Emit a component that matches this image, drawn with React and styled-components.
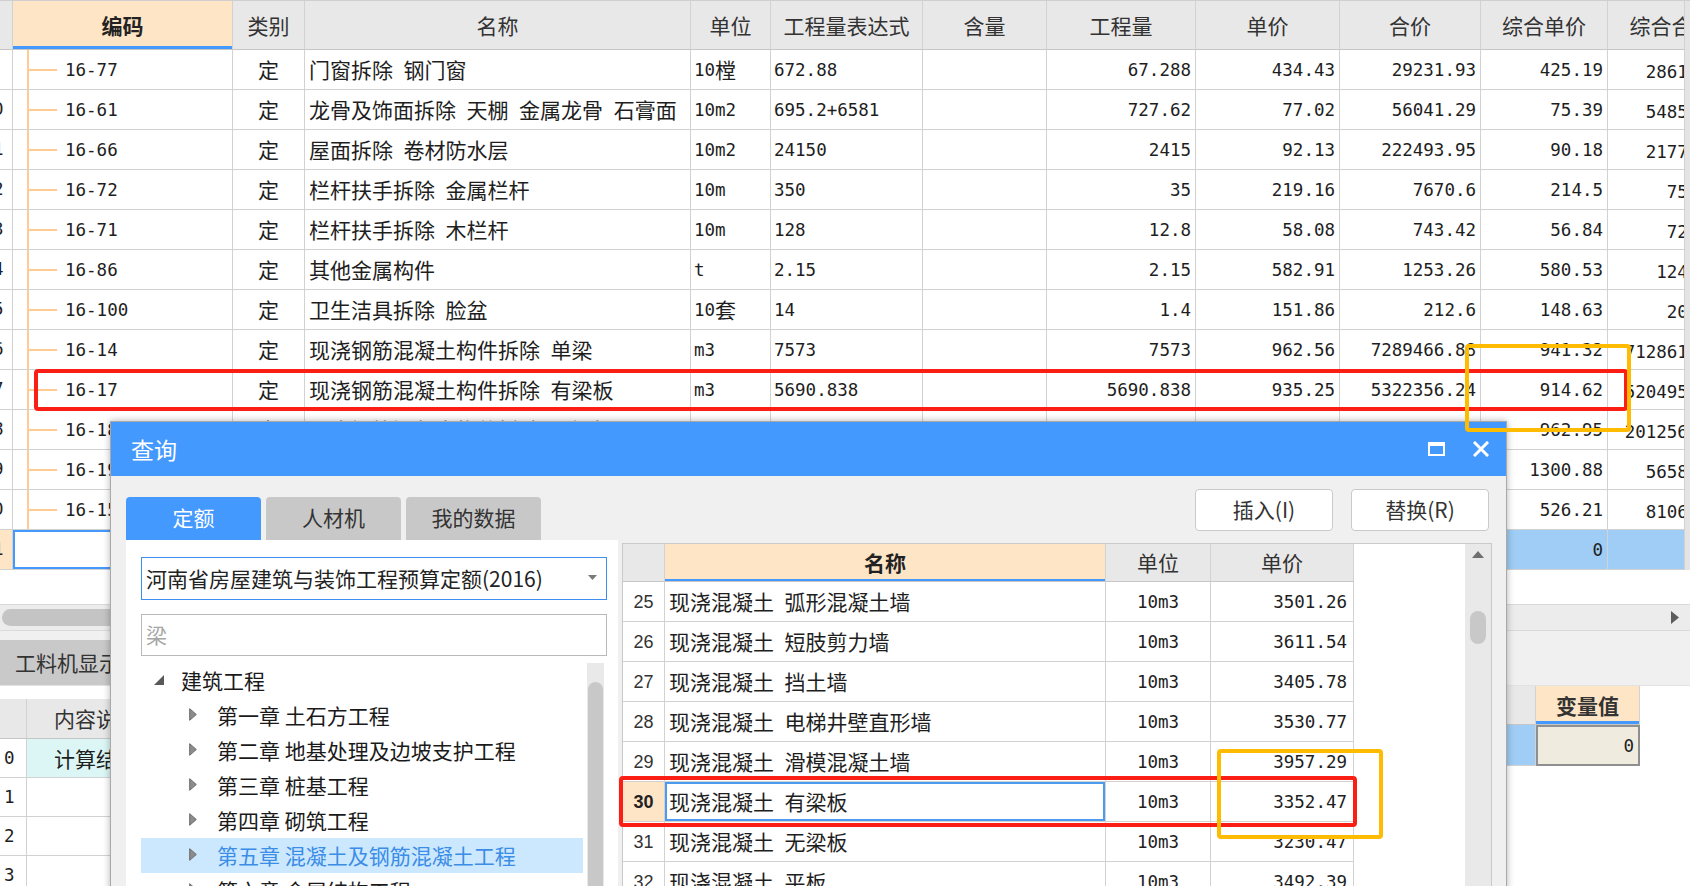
import React from 'react';
import styled, { createGlobalStyle, css } from 'styled-components';

const CJK = `"Noto Sans CJK SC", "Noto Sans", sans-serif`;
const MONO = `"DejaVu Sans Mono", "Liberation Mono", monospace`;
const SANS = `"Liberation Sans", Arial, sans-serif`;

const BLUE = '#4499fe';
const PEACH = '#fde5c6';
const LINE = '#d2d2d2';
const SEL_ROW = '#9fcdf5';

const GlobalStyle = createGlobalStyle`
  html, body { margin: 0; padding: 0; background: #fff; }
  body { width: 1690px; height: 886px; overflow: hidden; font-family: ${CJK}; color: #1e1e1e; }
  * { box-sizing: border-box; }
`;

const Half = styled.span`
  font-family: ${MONO};
  font-size: 0.834em;
  position: relative;
  top: 1px;
`;

function Txt({ children }) {
  const s = String(children ?? '');
  const parts = s.match(/[\x00-\x7f]+|[^\x00-\x7f]+/g) || [];
  return parts.map((p, i) =>
    /^[\x00-\x7f]/.test(p) ? <Half key={i}>{p}</Half> : <React.Fragment key={i}>{p}</React.Fragment>
  );
}

const JUST = { left: 'flex-start', center: 'center', right: 'flex-end' };

/* ---------------- main grid ---------------- */
const MAIN_COLS = [13, 220, 72, 386, 80, 152, 124, 149, 144, 141, 127, 77, 5];
const MAIN_TEMPLATE = MAIN_COLS.map((c) => c + 'px').join(' ');

const Page = styled.div`
  position: relative;
  width: 1690px;
  height: 886px;
  overflow: hidden;
  background: #fff;
  display: flex;
  flex-direction: column;
`;

const TableArea = styled.div`
  height: 604px;
  flex-shrink: 0;
  background: #fff;
  border-top: 1px solid #cfcfcf;
`;

const MainRow = styled.div`
  display: grid;
  grid-template-columns: ${MAIN_TEMPLATE};
  height: ${(p) => (p.$head ? 49 : 40)}px;
  background: ${(p) => (p.$sel ? SEL_ROW : '#fff')};
`;

const Cell = styled.div`
  display: flex;
  align-items: center;
  min-width: 0;
  overflow: hidden;
  white-space: pre;
  border-right: 1px solid ${LINE};
  border-bottom: 1px solid ${LINE};
  font-family: ${CJK};
  font-size: 21px;
  line-height: 1;
  color: #1e1e1e;
  justify-content: ${(p) => JUST[p.$al || 'left']};
  padding: 0 ${(p) => (p.$pad ?? 4)}px;
  position: relative;
`;

const HeadCell = styled(Cell)`
  background: #e8e8e8;
  color: #333;
  justify-content: center;
  border-bottom-color: #c6c6c6;
  ${(p) =>
    p.$hl &&
    css`
      background: ${PEACH};
      font-weight: 700;
      color: #222;
      box-shadow: inset 0 -3px 0 ${BLUE};
    `}
`;

const OverHead = styled(HeadCell)`
  padding: 0;
  justify-content: flex-start;
`;

const NumCell = styled(Cell)`
  padding: 0;
  justify-content: flex-start;
  ${(p) => p.$hl && css`background: ${PEACH};`}
`;

const NumInner = styled.span`
  flex: 0 0 40px;
  margin-left: -27px;
  text-align: center;
  font-family: ${MONO};
  font-size: 17.5px;
`;

const CodeCell = styled(Cell)`
  padding-left: 52px;
  ${(p) =>
    p.$focus
      ? css`
          background: #fff;
          box-shadow: inset 0 0 0 2px ${BLUE};
        `
      : css`
          &::before {
            content: '';
            position: absolute;
            left: 14px;
            top: -1px;
            bottom: -1px;
            width: 2px;
            background: #ffcb93;
          }
          &::after {
            content: '';
            position: absolute;
            left: 14px;
            top: 50%;
            width: 30px;
            height: 2px;
            margin-top: -1px;
            background: #ffcb93;
          }
        `}
`;

const OverCell = styled(Cell)`
  padding: 0;
  justify-content: flex-start;
`;

const OverInner = styled.span`
  flex: 0 0 127px;
  text-align: ${(p) => (p.$center ? 'center' : 'right')};
  padding-right: ${(p) => (p.$center ? 0 : 5)}px;
`;

const StripCell = styled.div`
  background: #e4e4e4;
`;

const mainRows = [
  { n: 9, code: '16-77', name: '门窗拆除 钢门窗', unit: '10樘', expr: '672.88', qty: '67.288', price: '434.43', total: '29231.93', cp: '425.19', ct: '28610.18' },
  { n: 10, code: '16-61', name: '龙骨及饰面拆除 天棚 金属龙骨 石膏面', unit: '10m2', expr: '695.2+6581', qty: '727.62', price: '77.02', total: '56041.29', cp: '75.39', ct: '54855.27' },
  { n: 11, code: '16-66', name: '屋面拆除 卷材防水层', unit: '10m2', expr: '24150', qty: '2415', price: '92.13', total: '222493.95', cp: '90.18', ct: '217784.7' },
  { n: 12, code: '16-72', name: '栏杆扶手拆除 金属栏杆', unit: '10m', expr: '350', qty: '35', price: '219.16', total: '7670.6', cp: '214.5', ct: '7507.5' },
  { n: 13, code: '16-71', name: '栏杆扶手拆除 木栏杆', unit: '10m', expr: '128', qty: '12.8', price: '58.08', total: '743.42', cp: '56.84', ct: '727.55' },
  { n: 14, code: '16-86', name: '其他金属构件', unit: 't', expr: '2.15', qty: '2.15', price: '582.91', total: '1253.26', cp: '580.53', ct: '1248.14' },
  { n: 15, code: '16-100', name: '卫生洁具拆除 脸盆', unit: '10套', expr: '14', qty: '1.4', price: '151.86', total: '212.6', cp: '148.63', ct: '208.08' },
  { n: 16, code: '16-14', name: '现浇钢筋混凝土构件拆除 单梁', unit: 'm3', expr: '7573', qty: '7573', price: '962.56', total: '7289466.88', cp: '941.32', ct: '7128616.36' },
  { n: 17, code: '16-17', name: '现浇钢筋混凝土构件拆除 有梁板', unit: 'm3', expr: '5690.838', qty: '5690.838', price: '935.25', total: '5322356.24', cp: '914.62', ct: '5204954.25' },
  { n: 18, code: '16-18', name: '现浇钢筋混凝土构件拆除 无梁板', unit: 'm3', expr: '2090', qty: '2090', price: '985.46', total: '2059611.40', cp: '962.95', ct: '2012565.50' },
  { n: 19, code: '16-19', name: '现浇钢筋混凝土构件拆除 平板', unit: 'm3', expr: '43.5', qty: '43.5', price: '1331.21', total: '57907.64', cp: '1300.88', ct: '56588.28' },
  { n: 20, code: '16-15', name: '现浇钢筋混凝土构件拆除 圈梁', unit: 'm3', expr: '154.05', qty: '154.05', price: '538.47', total: '82951.30', cp: '526.21', ct: '81062.65' },
];

const mainHeads = ['类别', '名称', '单位', '工程量表达式', '含量', '工程量', '单价', '合价', '综合单价'];

function MainTable() {
  return (
    <TableArea>
      <MainRow $head>
        <HeadCell />
        <HeadCell $hl>编码</HeadCell>
        {mainHeads.map((h) => (
          <HeadCell key={h}>{h}</HeadCell>
        ))}
        <OverHead>
          <OverInner $center>综合合价</OverInner>
        </OverHead>
        <StripCell />
      </MainRow>
      {mainRows.map((r) => (
        <MainRow key={r.n}>
          <NumCell><NumInner>{r.n}</NumInner></NumCell>
          <CodeCell><Txt>{r.code}</Txt></CodeCell>
          <Cell $al="center">定</Cell>
          <Cell $pad={4}><Txt>{r.name}</Txt></Cell>
          <Cell $pad={3}><Txt>{r.unit}</Txt></Cell>
          <Cell $pad={3}><Txt>{r.expr}</Txt></Cell>
          <Cell />
          <Cell $al="right"><Txt>{r.qty}</Txt></Cell>
          <Cell $al="right"><Txt>{r.price}</Txt></Cell>
          <Cell $al="right"><Txt>{r.total}</Txt></Cell>
          <Cell $al="right"><Txt>{r.cp}</Txt></Cell>
          <OverCell><OverInner><Txt>{r.ct}</Txt></OverInner></OverCell>
          <StripCell />
        </MainRow>
      ))}
      <MainRow $sel>
        <NumCell $hl><NumInner>21</NumInner></NumCell>
        <CodeCell $focus />
        <Cell />
        <Cell />
        <Cell />
        <Cell />
        <Cell />
        <Cell />
        <Cell />
        <Cell />
        <Cell $al="right"><Txt>0</Txt></Cell>
        <OverCell />
        <StripCell />
      </MainRow>
    </TableArea>
  );
}

/* ---------------- scroll & bottom panels ---------------- */
const HScroll = styled.div`
  height: 27px;
  flex-shrink: 0;
  background: #ececec;
  border-top: 1px solid #dadada;
  border-bottom: 1px solid #dadada;
  display: flex;
  align-items: center;
  justify-content: space-between;
  padding: 0 11px 0 2px;
`;

const HThumb = styled.div`
  width: 420px;
  height: 17px;
  border-radius: 9px;
  background: #c4c4c4;
`;

const Bottom = styled.div`
  flex: 1;
  display: flex;
  min-height: 0;
`;

const BottomLeft = styled.div`
  flex: 1;
  display: flex;
  flex-direction: column;
  background: #fff;
`;

const BottomRight = styled.div`
  width: 183px;
  display: flex;
  flex-direction: column;
  background: #fff;
`;

const TabStrip = styled.div`
  height: 55px;
  flex-shrink: 0;
  background: #f0f0f0;
  padding-top: 9px;
  display: flex;
  align-items: flex-start;
  border-bottom: 1px solid #e2e2e2;
`;

const PanelTab = styled.div`
  width: 220px;
  height: 45px;
  background: #c9c9c9;
  color: #333;
  font-size: 21px;
  display: flex;
  align-items: center;
  padding-left: 15px;
  padding-bottom: 2px;
`;

const LowerTable = styled.div`
  margin-top: ${(p) => p.$mt || 0}px;
`;

const LowerRow = styled.div`
  display: grid;
  grid-template-columns: ${(p) => p.$cols};
  height: ${(p) => p.$h}px;
`;

const LowerHead = styled(Cell)`
  background: #e8e8e8;
  color: #333;
  border-bottom-color: #c6c6c6;
  ${(p) =>
    p.$hl &&
    css`
      background: ${PEACH};
      font-weight: 700;
      justify-content: center;
      box-shadow: inset 0 -3px 0 ${BLUE};
    `}
`;

const LowerCell = styled(Cell)`
  ${(p) => p.$bg && css`background: ${p.$bg};`}
  ${(p) =>
    p.$edit &&
    css`
      background: #efecdf;
      border: 2px solid #8f8f8f;
    `}
`;

function BottomArea() {
  const cols = '27px 300px';
  return (
    <Bottom>
      <BottomLeft>
        <TabStrip>
          <PanelTab>工料机显示</PanelTab>
        </TabStrip>
        <LowerTable $mt={13}>
          <LowerRow $cols={cols} $h={40}>
            <LowerHead />
            <LowerHead $pad={27}>内容说明</LowerHead>
          </LowerRow>
          {['0', '1', '2', '3'].map((n) => (
            <LowerRow key={n} $cols={cols} $h={39}>
              <LowerCell $pad={4}><Txt>{n}</Txt></LowerCell>
              <LowerCell $pad={27} $bg={n === '0' ? '#dcf6f6' : undefined}>
                {n === '0' ? '计算结果' : ''}
              </LowerCell>
            </LowerRow>
          ))}
        </LowerTable>
      </BottomLeft>
      <BottomRight>
        <TabStrip />
        <LowerTable>
          <LowerRow $cols="29px 104px" $h={39}>
            <LowerHead />
            <LowerHead $hl>变量值</LowerHead>
          </LowerRow>
          <LowerRow $cols="29px 104px" $h={41}>
            <LowerCell $bg={SEL_ROW} />
            <LowerCell $edit $al="right" $pad={4}><Txt>0</Txt></LowerCell>
          </LowerRow>
        </LowerTable>
      </BottomRight>
    </Bottom>
  );
}

/* ---------------- dialog ---------------- */
const Dialog = styled.div`
  position: absolute;
  left: 110px;
  top: 421px;
  width: 1397px;
  height: 480px;
  background: #f0f0f0;
  border: 1px solid #a9a9a9;
  box-shadow: 0 0 7px rgba(0, 0, 0, 0.3);
  display: flex;
  flex-direction: column;
  overflow: hidden;
  z-index: 5;
`;

const TitleBar = styled.div`
  height: 54px;
  flex-shrink: 0;
  background: ${BLUE};
  display: flex;
  align-items: center;
  padding: 0 17px 0 20px;
  color: #fff;
  font-size: 23px;
`;

const TitleText = styled.div`
  flex: 1;
`;

const TitleIcons = styled.div`
  display: flex;
  align-items: center;
  gap: 28px;
`;

const Toolbar = styled.div`
  height: 64px;
  flex-shrink: 0;
  display: flex;
  align-items: flex-end;
  padding: 0 17px 0 15px;
`;

const Tabs = styled.div`
  display: flex;
  gap: 5px;
  flex: 1;
`;

const Tab = styled.div`
  width: 135px;
  height: 43px;
  border-radius: 4px 4px 0 0;
  display: flex;
  align-items: center;
  justify-content: center;
  padding-bottom: 3px;
  font-size: 21px;
  background: ${(p) => (p.$active ? BLUE : '#c8c8c8')};
  color: ${(p) => (p.$active ? '#fff' : '#333')};
`;

const Buttons = styled.div`
  display: flex;
  gap: 18px;
  margin-bottom: 9px;
`;

const Button = styled.div`
  width: 138px;
  height: 42px;
  border: 1px solid #cacaca;
  border-radius: 4px;
  background: #fff;
  display: flex;
  align-items: center;
  justify-content: center;
  padding-bottom: 3px;
  font-size: 21px;
  color: #333;
`;

const Content = styled.div`
  flex: 1;
  display: flex;
  gap: 4px;
  padding-left: 15px;
  min-height: 0;
`;

const LeftPanel = styled.div`
  width: 492px;
  background: #fff;
  padding: 17px 11px 0 15px;
  display: flex;
  flex-direction: column;
`;

const SelectBox = styled.div`
  height: 43px;
  border: 1px solid #3d8ef0;
  background: #fff;
  display: flex;
  align-items: center;
  justify-content: space-between;
  padding: 0 9px 2px 4px;
  font-size: 21px;
  color: #222;
  white-space: nowrap;
`;

const SearchBox = styled.div`
  height: 42px;
  margin-top: 14px;
  border: 1px solid #b9b9b9;
  background: #fff;
  display: flex;
  align-items: center;
  padding: 0 0 2px 4px;
  font-size: 21px;
  color: #a6a6a6;
`;

const TreeWrap = styled.div`
  margin-top: 7px;
  flex: 1;
  display: flex;
  min-height: 0;
`;

const TreeList = styled.div`
  width: 442px;
`;

const TreeItem = styled.div`
  height: 35px;
  display: flex;
  align-items: center;
  padding-left: ${(p) => (p.$level ? 48 : 13)}px;
  padding-bottom: 2px;
  background: ${(p) => (p.$sel ? '#cce8ff' : 'transparent')};
  color: ${(p) => (p.$sel ? '#3b8de6' : '#1a1a1a')};
  font-size: 21px;
  white-space: nowrap;
`;

const ArrowBox = styled.span`
  width: ${(p) => (p.$level ? 28 : 27)}px;
  display: flex;
  align-items: center;
  flex-shrink: 0;
`;

const VTrack = styled.div`
  width: ${(p) => p.$w}px;
  margin-left: ${(p) => p.$ml || 0}px;
  background: #e9e9e9;
  display: flex;
  flex-direction: column;
  align-items: center;
  padding-top: ${(p) => p.$pt}px;
  flex-shrink: 0;
`;

const VThumb = styled.div`
  width: ${(p) => p.$w}px;
  height: ${(p) => p.$h}px;
  margin-top: ${(p) => p.$mt}px;
  border-radius: 8px;
  background: #c8c8c8;
  flex-shrink: 0;
`;

const GridBox = styled.div`
  width: 870px;
  margin-top: 3px;
  background: #fff;
  border: 1px solid #cacaca;
  display: flex;
`;

const GridCols = styled.div`
  width: 732px;
  flex-shrink: 0;
`;

const GridFill = styled.div`
  flex: 1;
`;

const GRID_TEMPLATE = '42px 441px 105px 143px';

const GRow = styled.div`
  display: grid;
  grid-template-columns: ${GRID_TEMPLATE};
  height: ${(p) => (p.$head ? 38 : 40)}px;
`;

const GHead = styled(Cell)`
  background: #e8e8e8;
  color: #333;
  justify-content: center;
  border-bottom-color: #c6c6c6;
  ${(p) =>
    p.$hl &&
    css`
      background: ${PEACH};
      font-weight: 700;
      color: #222;
      box-shadow: inset 0 -2px 0 ${BLUE};
    `}
`;

const GNum = styled(Cell)`
  justify-content: center;
  font-family: ${SANS};
  font-size: 18px;
  color: #333;
  ${(p) =>
    p.$hl &&
    css`
      background: ${PEACH};
      font-weight: 700;
      color: #222;
    `}
`;

const GName = styled(Cell)`
  ${(p) =>
    p.$focus &&
    css`
      box-shadow: inset 0 0 0 2px #4d9bef;
    `}
`;

const gridRows = [
  { n: 25, name: '现浇混凝土 弧形混凝土墙', price: '3501.26' },
  { n: 26, name: '现浇混凝土 短肢剪力墙', price: '3611.54' },
  { n: 27, name: '现浇混凝土 挡土墙', price: '3405.78' },
  { n: 28, name: '现浇混凝土 电梯井壁直形墙', price: '3530.77' },
  { n: 29, name: '现浇混凝土 滑模混凝土墙', price: '3957.29' },
  { n: 30, name: '现浇混凝土 有梁板', price: '3352.47', sel: true },
  { n: 31, name: '现浇混凝土 无梁板', price: '3230.47' },
  { n: 32, name: '现浇混凝土 平板', price: '3492.39' },
];

const treeItems = [
  { t: '建筑工程', level: 0 },
  { t: '第一章 土石方工程', level: 1 },
  { t: '第二章 地基处理及边坡支护工程', level: 1 },
  { t: '第三章 桩基工程', level: 1 },
  { t: '第四章 砌筑工程', level: 1 },
  { t: '第五章 混凝土及钢筋混凝土工程', level: 1, sel: true },
  { t: '第六章 金属结构工程', level: 1 },
];

const UpArrow = () => (
  <svg width="12" height="7" viewBox="0 0 12 7">
    <polygon points="6,0 12,7 0,7" fill="#6f6f6f" />
  </svg>
);

function QueryDialog() {
  return (
    <Dialog>
      <TitleBar>
        <TitleText>查询</TitleText>
        <TitleIcons>
          <svg width="17" height="14" viewBox="0 0 17 14">
            <rect x="1" y="2" width="15" height="11" fill="none" stroke="#fff" strokeWidth="2" />
            <rect x="0" y="0" width="17" height="4" fill="#fff" />
          </svg>
          <svg width="16" height="16" viewBox="0 0 16 16">
            <path d="M2 2 L14 14 M14 2 L2 14" stroke="#fff" strokeWidth="3" strokeLinecap="square" />
          </svg>
        </TitleIcons>
      </TitleBar>
      <Toolbar>
        <Tabs>
          <Tab $active>定额</Tab>
          <Tab>人材机</Tab>
          <Tab>我的数据</Tab>
        </Tabs>
        <Buttons>
          <Button>插入(I)</Button>
          <Button>替换(R)</Button>
        </Buttons>
      </Toolbar>
      <Content>
        <LeftPanel>
          <SelectBox>
            <span>河南省房屋建筑与装饰工程预算定额(2016)</span>
            <svg width="9" height="5" viewBox="0 0 9 5">
              <polygon points="0,0 9,0 4.5,5" fill="#7a7a7a" />
            </svg>
          </SelectBox>
          <SearchBox>梁</SearchBox>
          <TreeWrap>
            <TreeList>
              {treeItems.map((it) => (
                <TreeItem key={it.t} $level={it.level} $sel={it.sel}>
                  <ArrowBox $level={it.level}>
                    {it.level === 0 ? (
                      <svg width="10" height="10" viewBox="0 0 10 10">
                        <polygon points="10,0 10,10 0,10" fill="#595959" />
                      </svg>
                    ) : (
                      <svg width="8" height="13" viewBox="0 0 8 13">
                        <polygon points="0.7,0.7 7.3,6.5 0.7,12.3" fill="#8c8c8c" stroke="#6a6a6a" strokeWidth="1" />
                      </svg>
                    )}
                  </ArrowBox>
                  {it.t}
                </TreeItem>
              ))}
            </TreeList>
            <VTrack $w={17} $ml={4} $pt={7}>
              <UpArrow />
              <VThumb $w={15} $h={300} $mt={12} />
            </VTrack>
          </TreeWrap>
        </LeftPanel>
        <GridBox>
          <GridCols>
            <GRow $head>
              <GHead />
              <GHead $hl>名称</GHead>
              <GHead>单位</GHead>
              <GHead>单价</GHead>
            </GRow>
            {gridRows.map((r) => (
              <GRow key={r.n}>
                <GNum $hl={r.sel}>{r.n}</GNum>
                <GName $focus={r.sel} $pad={4}><Txt>{r.name}</Txt></GName>
                <Cell $al="center"><Txt>10m3</Txt></Cell>
                <Cell $al="right" $pad={6}><Txt>{r.price}</Txt></Cell>
              </GRow>
            ))}
          </GridCols>
          <GridFill />
          <VTrack $w={26} $pt={7}>
            <UpArrow />
            <VThumb $w={16} $h={33} $mt={53} />
          </VTrack>
        </GridBox>
      </Content>
    </Dialog>
  );
}

/* ---------------- annotations ---------------- */
const Mark = styled.div`
  position: absolute;
  left: ${(p) => p.$x}px;
  top: ${(p) => p.$y}px;
  width: ${(p) => p.$w}px;
  height: ${(p) => p.$h}px;
  border: 4px solid ${(p) => (p.$red ? '#fa1e14' : '#ffbb00')};
  border-radius: 4px;
  z-index: 10;
  pointer-events: none;
`;

export default function App() {
  return (
    <>
      <GlobalStyle />
      <Page>
        <MainTable />
        <HScroll>
          <HThumb />
          <svg width="8" height="13" viewBox="0 0 8 13">
            <polygon points="0,0 8,6.5 0,13" fill="#5c5c5c" />
          </svg>
        </HScroll>
        <BottomArea />
        <QueryDialog />
        <Mark $red $x={34} $y={369} $w={1594} $h={42} />
        <Mark $x={1465} $y={344} $w={166} $h={88} />
        <Mark $red $x={619} $y={776} $w={738} $h={51} />
        <Mark $x={1217} $y={749} $w={166} $h={90} />
      </Page>
    </>
  );
}
